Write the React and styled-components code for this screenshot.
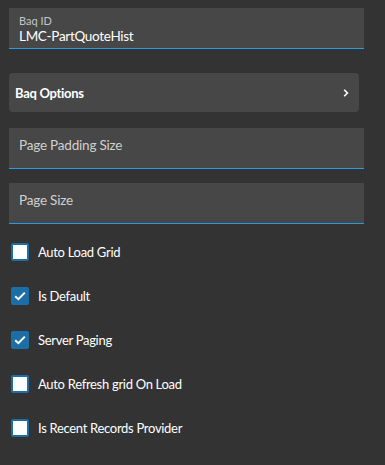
import React from "react";
import styled, { createGlobalStyle } from "styled-components";

const GlobalStyle = createGlobalStyle`
  html, body {
    margin: 0;
    padding: 0;
    background: #333333;
  }
  body {
    font-family: Lato, "Open Sans", sans-serif;
    color: #ffffff;
  }
`;

const Panel = styled.div`
  width: 385px;
  height: 465px;
  box-sizing: border-box;
  padding: 8px 0 0 9px;
  display: flex;
  flex-direction: column;
`;

const Field = styled.div`
  width: 355px;
  height: 40px;
  box-sizing: content-box;
  background: #474747;
  border-bottom: 1px solid #2a9ae0;
  margin-bottom: ${(p) => p.gap || 0}px;
  display: flex;
  flex-direction: column;
`;

const FieldInner = styled.div`
  padding: ${(p) => (p.filled ? "6px 10px 0" : "8px 10px 0")};
  display: flex;
  flex-direction: column;
`;

const FieldLabel = styled.span`
  font-size: 11px;
  line-height: 13px;
  color: #c4c4c4;
`;

const FieldValue = styled.span`
  font-size: 13.5px;
  line-height: 18px;
  letter-spacing: -0.3px;
  color: #ffffff;
`;

const Placeholder = styled.span`
  font-size: 13.5px;
  line-height: 18px;
  letter-spacing: -0.2px;
  color: #d0d0d0;
`;

const Expander = styled.div`
  width: 350px;
  height: 39px;
  box-sizing: border-box;
  background: #474747;
  border-radius: 4px;
  padding: 0 10px 0 6px;
  margin-bottom: 16px;
  display: flex;
  align-items: center;
  justify-content: space-between;
  font-size: 13px;
  font-weight: 700;
  letter-spacing: -0.3px;
  color: #ffffff;
`;

const CheckList = styled.div`
  margin-top: 6px;
  display: flex;
  flex-direction: column;
`;

const CheckRow = styled.label`
  height: 44px;
  display: flex;
  align-items: center;
  gap: 9px;
  padding-left: 2px;
  font-size: 13px;
  letter-spacing: -0.3px;
  color: #ffffff;
`;

const Box = styled.span`
  width: 18px;
  height: 18px;
  box-sizing: border-box;
  border-radius: 2px;
  border: 2.5px solid #1b6fa6;
  background: ${(p) => (p.checked ? "#1b6fa6" : "#ffffff")};
  display: flex;
  align-items: center;
  justify-content: center;
`;

const Check = () => (
  <svg width="12" height="10" viewBox="0 0 12 10">
    <path d="M1.2 5.2 L4.4 8.2 L10.8 1.6" fill="none" stroke="#fff" strokeWidth="2" />
  </svg>
);

const Chevron = () => (
  <svg width="6" height="8" viewBox="0 0 6 8">
    <path d="M1.2 0.8 L4.4 4 L1.2 7.2" fill="none" stroke="#fff" strokeWidth="1.6" />
  </svg>
);

const options = [
  { label: "Auto Load Grid", checked: false },
  { label: "Is Default", checked: true },
  { label: "Server Paging", checked: true },
  { label: "Auto Refresh grid On Load", checked: false },
  { label: "Is Recent Records Provider", checked: false },
];

export default function App() {
  return (
    <>
      <GlobalStyle />
      <Panel>
        <Field gap={24}>
          <FieldInner filled>
            <FieldLabel>Baq ID</FieldLabel>
            <FieldValue>LMC-PartQuoteHist</FieldValue>
          </FieldInner>
        </Field>
        <Expander>
          <span>Baq Options</span>
          <Chevron />
        </Expander>
        <Field gap={14}>
          <FieldInner>
            <Placeholder>Page Padding Size</Placeholder>
          </FieldInner>
        </Field>
        <Field>
          <FieldInner>
            <Placeholder>Page Size</Placeholder>
          </FieldInner>
        </Field>
        <CheckList>
          {options.map((o) => (
            <CheckRow key={o.label}>
              <Box checked={o.checked}>{o.checked && <Check />}</Box>
              {o.label}
            </CheckRow>
          ))}
        </CheckList>
      </Panel>
    </>
  );
}
